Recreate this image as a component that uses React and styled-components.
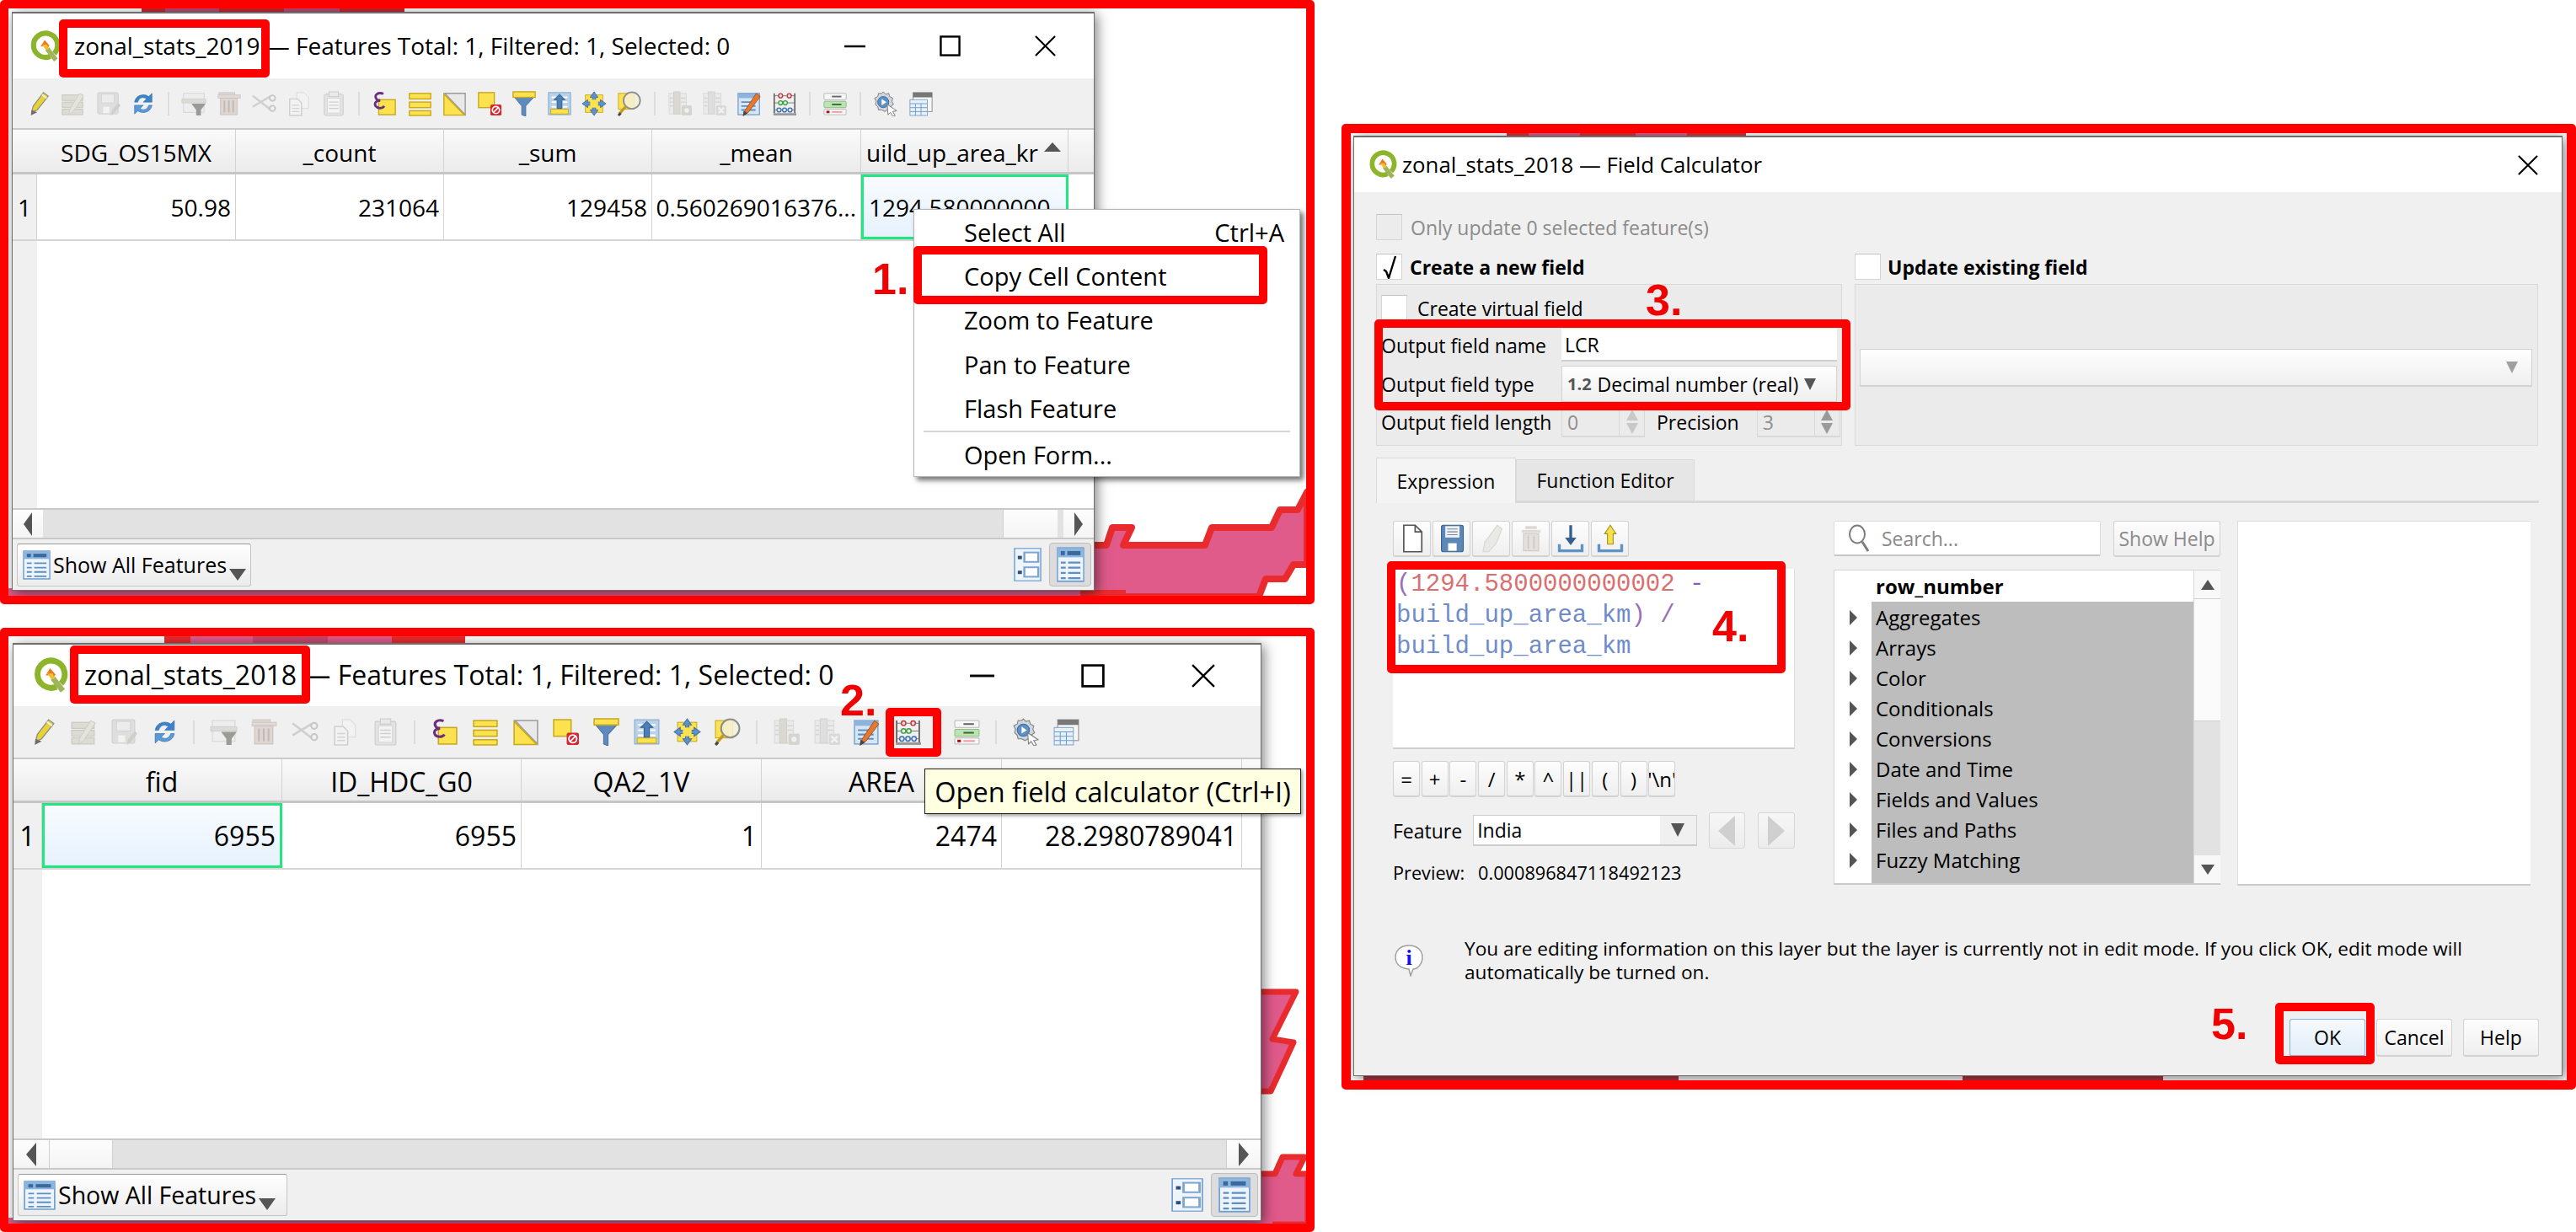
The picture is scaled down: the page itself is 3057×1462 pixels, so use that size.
import React from 'react';
import styled, { createGlobalStyle } from 'styled-components';

const UI = '"Open Sans","Liberation Sans",sans-serif';

const Global = createGlobalStyle`
  html, body { margin: 0; padding: 0; background: #fff; }
  body { font-family: ${UI}; color: #000; }
  * { box-sizing: border-box; }
`;

const Canvas = styled.div`
  position: relative;
  width: 3057px;
  height: 1462px;
  overflow: hidden;
  background: #fff;
`;
const Backdrop = styled.svg`
  position: absolute;
  left: 0;
  top: 0;
`;
const Win = styled.section`
  position: absolute;
  left: ${p => p.$x}px;
  top: ${p => p.$y}px;
  width: ${p => p.$w}px;
  height: ${p => p.$h}px;
  display: flex;
  flex-direction: column;
  background: #fff;
  border: 1px solid #6e6e6e;
  border-top-width: 2px;
  box-shadow: 3px 3px 14px rgba(0, 0, 0, 0.5);
`;
const TitleBar = styled.header`
  flex: none;
  height: ${p => p.$h}px;
  display: flex;
  align-items: center;
  padding-left: ${p => p.$pad}px;
  background: #fff;
  font-size: ${p => p.$fs}px;
  white-space: pre;
`;
const LogoSlot = styled.span`
  flex: none;
  display: flex;
  width: ${p => p.$w}px;
`;
const TitleText = styled.span`
  flex: 1;
  line-height: 1.2;
`;
const WinButton = styled.span`
  flex: none;
  width: ${p => p.$w}px;
  margin-right: ${p => p.$mr || 0}px;
  display: flex;
  justify-content: center;
  align-items: center;
`;
const Toolbar = styled.div`
  flex: none;
  height: ${p => p.$h}px;
  display: flex;
  align-items: center;
  padding-left: ${p => p.$pad}px;
  background: #f0f0f0;
  border-bottom: 2px solid #c9c9c9;
`;
const ToolBtn = styled.span`
  flex: none;
  width: ${p => p.$w}px;
  display: flex;
  justify-content: center;
`;
const ToolSep = styled.span`
  flex: none;
  width: ${p => p.$w}px;
  height: 28px;
  display: flex;
  justify-content: center;
  &::before { content: ''; width: 2px; background: #dcdcdc; }
`;
const TableArea = styled.div`
  flex: 1;
  min-height: 0;
  display: flex;
  flex-direction: column;
  font-size: ${p => p.$fs}px;
  background: linear-gradient(to right, #f0f0f0 ${p => p.$head}px, #fff ${p => p.$head}px);
`;
const HeaderRow = styled.div`
  flex: none;
  height: ${p => p.$h}px;
  display: flex;
  background: linear-gradient(#fafafa, #ebebeb);
  border-bottom: 3px solid #c6c6c6;
`;
const HeadCorner = styled.div`
  flex: none;
  width: ${p => p.$w}px;
`;
const HeadCell = styled.div`
  flex: none;
  width: ${p => p.$w}px;
  display: flex;
  align-items: center;
  justify-content: ${p => (p.$left ? 'flex-start' : 'center')};
  padding: 4px 0 0 ${p => (p.$left ? 6 : 0)}px;
  border-right: 1.5px solid #d2d2d2;
  overflow: hidden;
  white-space: nowrap;
  position: relative;
`;
const SortMark = styled.span`
  position: absolute;
  right: 8px;
  top: 15px;
  width: 0;
  height: 0;
  border-left: 10px solid transparent;
  border-right: 10px solid transparent;
  border-bottom: 11px solid #555;
`;
const DataRow = styled.div`
  flex: none;
  height: ${p => p.$h}px;
  display: flex;
  border-bottom: 2px solid #d5d5d5;
`;
const RowHead = styled.div`
  flex: none;
  width: ${p => p.$w}px;
  display: flex;
  align-items: center;
  justify-content: center;
  background: #f0f0f0;
  border-right: 1.5px solid #d2d2d2;
`;
const Cell = styled.div`
  flex: none;
  width: ${p => p.$w}px;
  display: flex;
  align-items: center;
  justify-content: ${p => (p.$start ? 'flex-start' : 'flex-end')};
  padding: 0 ${p => (p.$start ? 0 : 5)}px 0 ${p => (p.$start ? 6 : 0)}px;
  border-right: 1.5px solid #d2d2d2;
  overflow: hidden;
  white-space: nowrap;
  ${p => p.$sel && `
    border: 3px solid #22e67e;
    background: linear-gradient(#f8fbff, #e6f2fd);
  `}
`;
const ScrollBar = styled.div`
  flex: none;
  height: 37px;
  display: flex;
  background: #e2e2e2;
  border-top: 2px solid #c9c9c9;
  border-bottom: 2px solid #c9c9c9;
`;
const ScrollBtn = styled.div`
  flex: none;
  width: ${p => p.$w}px;
  margin-left: ${p => p.$ml || 0}px;
  display: flex;
  align-items: center;
  justify-content: center;
  background: linear-gradient(#fdfdfd, #f4f4f4);
  border-left: ${p => (p.$edge ? '1px solid #cfcfcf' : 'none')};
  border-right: ${p => (p.$edgeR ? '1px solid #cfcfcf' : 'none')};
`;
const ScrollTrack = styled.div`
  flex: 1;
`;
const Tri = styled.span`
  display: inline-block;
  flex: none;
  width: 0;
  height: 0;
  ${p => {
    const c = p.$c || '#555';
    const l = p.$l || 8;
    const b = p.$b || 14;
    if (p.$dir === 'left') return `border-top:${b / 2}px solid transparent;border-bottom:${b / 2}px solid transparent;border-right:${l}px solid ${c};`;
    if (p.$dir === 'right') return `border-top:${b / 2}px solid transparent;border-bottom:${b / 2}px solid transparent;border-left:${l}px solid ${c};`;
    if (p.$dir === 'up') return `border-left:${b / 2}px solid transparent;border-right:${b / 2}px solid transparent;border-bottom:${l}px solid ${c};`;
    return `border-left:${b / 2}px solid transparent;border-right:${b / 2}px solid transparent;border-top:${l}px solid ${c};`;
  }}
`;
const BottomBar = styled.div`
  flex: none;
  height: ${p => p.$h}px;
  display: flex;
  align-items: center;
  padding: 0 3px 0 5px;
  background: #f0f0f0;
  justify-content: space-between;
`;
const ShowButton = styled.div`
  width: ${p => p.$w}px;
  height: ${p => p.$h}px;
  display: flex;
  align-items: center;
  padding-left: 6px;
  gap: 3px;
  font-size: ${p => p.$fs}px;
  background: linear-gradient(#fefefe, #ececec);
  border: 1px solid #c4c4c4;
  border-top-color: #9a9a9a;
  border-radius: 3px;
  white-space: nowrap;
`;
const ShowArrow = styled.span`
  align-self: flex-end;
  margin-bottom: 6px;
  display: flex;
`;
const ViewToggle = styled.div`
  display: flex;
  align-items: center;
  gap: ${p => p.$gap}px;
`;
const ViewBtn = styled.span`
  width: ${p => p.$w}px;
  height: 52px;
  display: flex;
  align-items: center;
  justify-content: center;
  border-radius: 4px;
  ${p => p.$on && 'background:#dcdcdc;border:1px solid #bdbdbd;'}
`;
const Menu = styled.div`
  position: absolute;
  left: 1084px;
  top: 248px;
  width: 459px;
  height: 318px;
  background: #fff;
  border: 1px solid #b5b5b5;
  box-shadow: 4px 4px 6px rgba(0, 0, 0, 0.55);
  font-size: 29px;
  white-space: nowrap;
`;
const MenuItem = styled.div`
  height: 52.4px;
  display: flex;
  justify-content: space-between;
  align-items: center;
  padding: 0 18px 0 59px;
`;
const MenuSep = styled.div`
  height: 2px;
  margin: 0 11px 0 11px;
  background: #d6d6d6;
`;
const Tooltip = styled.div`
  position: absolute;
  left: 1097px;
  top: 912px;
  width: 447px;
  height: 54px;
  display: flex;
  align-items: center;
  justify-content: center;
  background: #ffffe1;
  border: 1.5px solid #222;
  box-shadow: 2px 2px 4px rgba(0, 0, 0, 0.4);
  font-size: 32.5px;
  white-space: nowrap;
`;
const RedFrame = styled.div`
  position: absolute;
  left: ${p => p.$x}px;
  top: ${p => p.$y}px;
  width: ${p => p.$w}px;
  height: ${p => p.$h}px;
  border: ${p => p.$t || 10}px solid #ff0000;
  border-radius: 5px;
`;
const Step = styled.div`
  position: absolute;
  left: ${p => p.$x}px;
  top: ${p => p.$y}px;
  font-family: "Liberation Sans", Arial, sans-serif;
  font-weight: 700;
  font-size: 52px;
  line-height: 1;
  color: #f00000;
`;
const DialogBody = styled.div`
  flex: 1;
  display: flex;
  flex-direction: column;
  padding: 26px 27px 0 26px;
  background: #f0f0f0;
  font-size: 23px;
`;
const CheckRow = styled.div`
  display: flex;
  align-items: center;
  height: 31px;
  gap: ${p => p.$gap || 10}px;
  font-weight: ${p => (p.$bold ? 700 : 400)};
  color: ${p => (p.$off ? '#8b8b8b' : '#000')};
  white-space: nowrap;
  font-size: 23px;
`;
const CheckBox = styled.span`
  flex: none;
  width: 31px;
  height: 31px;
  display: flex;
  align-items: center;
  justify-content: center;
  background: ${p => (p.$off ? '#ececec' : '#fff')};
  border: 1px solid #d4d4d4;
  border-top-color: #c4c4c4;
`;
const FieldColumns = styled.div`
  margin-top: 16px;
  display: grid;
  grid-template-columns: 553px 811px;
  column-gap: 15px;
`;
const GroupBox = styled.div`
  margin-top: 5px;
  height: 192px;
  background: #ebebeb;
  border: 1px solid #d9d9d9;
  padding: ${p => p.$pt}px 6px 0 5px;
`;
const FormGrid = styled.div`
  margin-top: 9px;
  display: grid;
  grid-template-columns: 214px 327px;
  grid-template-rows: 39px 44px 36px;
  row-gap: 5px;
  align-items: center;
`;
const FormLabel = styled.div`
  white-space: nowrap;
`;
const LineInput = styled.div`
  height: 39px;
  display: flex;
  align-items: center;
  padding-left: 4px;
  background: #fff;
  border-bottom: 2px solid #cfcfcf;
`;
const Combo = styled.div`
  height: ${p => p.$h || 44}px;
  display: flex;
  align-items: center;
  padding: 0 ${p => p.$pr || 16}px 0 6px;
  gap: 7px;
  background: linear-gradient(#fefefe, #efefef);
  border: 1px solid #d2d2d2;
  border-bottom-width: 2px;
  white-space: nowrap;
  justify-content: ${p => (p.$end ? 'flex-end' : 'flex-start')};
`;
const TypeBadge = styled.span`
  font-weight: 700;
  font-size: 20px;
  color: #555;
`;
const SpinRow = styled.div`
  display: flex;
  align-items: center;
`;
const Spin = styled.div`
  flex: none;
  width: 99px;
  height: 36px;
  display: flex;
  align-items: center;
  justify-content: space-between;
  padding-left: 6px;
  color: #8f8f8f;
  background: #ebebeb;
  border: 1px solid #d8d8d8;
  border-bottom-width: 2px;
`;
const SpinArrows = styled.span`
  width: 30px;
  height: 100%;
  display: flex;
  flex-direction: column;
  align-items: center;
  justify-content: space-around;
  border-left: 1px solid #d8d8d8;
`;
const PrecisionLabel = styled.span`
  margin: 0 21px 0 14px;
  white-space: nowrap;
`;
const TabBar = styled.div`
  margin-top: 14px;
  height: 54px;
  display: flex;
  align-items: flex-end;
  border-bottom: 3px solid #d8d8d8;
  font-size: 23px;
`;
const Tab = styled.div`
  width: ${p => p.$w}px;
  height: ${p => (p.$on ? 54 : 49)}px;
  margin-bottom: ${p => (p.$on ? -3 : 0)}px;
  display: flex;
  align-items: center;
  justify-content: center;
  background: ${p => (p.$on ? '#f4f4f4' : '#e6e6e6')};
  border: 1px solid #dadada;
  border-bottom: none;
  white-space: nowrap;
`;
const ExprGrid = styled.div`
  margin: 21px 0 0 20px;
  height: 431px;
  display: grid;
  grid-template-columns: 477px 459px 348px;
  column-gap: 46px;
  & > :nth-child(3) { margin-left: -26px; width: 348px; }
`;
const Col = styled.div`
  display: flex;
  flex-direction: column;
  min-width: 0;
`;
const IconRow = styled.div`
  height: 43px;
  display: flex;
  gap: 2px;
`;
const IconBtn = styled.span`
  width: 45px;
  height: 43px;
  display: flex;
  align-items: center;
  justify-content: center;
  background: linear-gradient(#fdfdfd, #efefef);
  border: 1px solid #d2d2d2;
  border-bottom-width: 2px;
  border-radius: 3px;
`;
const Editor = styled.div`
  margin-top: 14px;
  height: 214px;
  padding-left: 4px;
  background: #fff;
  border-bottom: 2px solid #cfcfcf;
  border-right: 1px solid #dcdcdc;
  font-family: "Liberation Mono", monospace;
  font-size: 29px;
  line-height: 37px;
  white-space: pre;
`;
const Tok = styled.span`
  color: ${p => p.$c};
`;
const OpRow = styled.div`
  margin-top: 14px;
  display: flex;
  gap: 1.7px;
`;
const OpBtn = styled.span`
  width: 32px;
  height: 43px;
  display: flex;
  align-items: center;
  justify-content: center;
  font-size: 24px;
  background: linear-gradient(#fdfdfd, #efefef);
  border: 1px solid #d2d2d2;
  border-bottom-width: 2px;
  border-radius: 3px;
  white-space: nowrap;
  overflow: hidden;
`;
const FeatureRow = styled.div`
  margin-top: 18px;
  height: 43px;
  display: flex;
  align-items: center;
  font-size: 23px;
`;
const FeatureCombo = styled.div`
  margin-left: 13px;
  width: 267px;
  height: 37px;
  display: flex;
  align-items: center;
  justify-content: space-between;
  padding-left: 4px;
  background: #fff;
  border: 1px solid #cdcdcd;
  border-bottom-width: 2px;
`;
const ComboArrowBox = styled.span`
  width: 43px;
  height: 100%;
  display: flex;
  align-items: center;
  justify-content: center;
  background: #f0f0f0;
`;
const NavBtn = styled.span`
  width: 44px;
  height: 43px;
  margin-left: ${p => p.$ml}px;
  display: flex;
  align-items: center;
  justify-content: center;
  background: linear-gradient(#f6f6f6, #ececec);
  border: 1px solid #d6d6d6;
  border-radius: 3px;
`;
const PreviewRow = styled.div`
  margin-top: 12px;
  height: 32px;
  display: flex;
  gap: 16px;
  align-items: center;
  font-size: 21.7px;
  white-space: nowrap;
`;
const SearchLine = styled.div`
  display: flex;
  gap: 15px;
`;
const SearchBox = styled.div`
  width: 317px;
  height: 42px;
  display: flex;
  align-items: center;
  gap: 14px;
  padding-left: 16px;
  color: #8a8a8a;
  background: #fff;
  border: 1px solid #dcdcdc;
  border-bottom: 2px solid #c6c6c6;
  border-radius: 2px;
  font-size: 23px;
`;
const PlainBtn = styled.span`
  width: ${p => p.$w}px;
  height: ${p => p.$h}px;
  display: flex;
  align-items: center;
  justify-content: center;
  color: ${p => (p.$off ? '#8a8a8a' : '#000')};
  background: ${p => (p.$hot ? 'linear-gradient(#f5fafe,#e1edf9)' : 'linear-gradient(#fdfdfd,#efefef)')};
  border: 1px solid ${p => (p.$hot ? '#7db5ea' : '#d2d2d2')};
  border-bottom-width: 2px;
  border-radius: 3px;
  font-size: 23px;
`;
const FuncList = styled.div`
  margin-top: 15px;
  height: 374px;
  display: flex;
  background: #fff;
  border-top: 1px solid #d4d4d4;
  border-left: 1px solid #d4d4d4;
  border-bottom: 2px solid #cacaca;
  overflow: hidden;
`;
const FuncItems = styled.div`
  flex: 1;
  min-width: 0;
  overflow: hidden;
  font-size: 24px;
`;
const FuncHead = styled.div`
  height: 37px;
  padding-left: 49px;
  display: flex;
  align-items: center;
  font-weight: 700;
`;
const FuncRow = styled.div`
  height: 36px;
  display: flex;
  white-space: nowrap;
`;
const FuncArrow = styled.span`
  flex: none;
  width: 44px;
  display: flex;
  align-items: center;
  padding: 1px 0 0 18px;
`;
const FuncLabel = styled.span`
  flex: 1;
  display: flex;
  align-items: center;
  padding: 1px 0 0 5px;
  background: #bdbdbd;
`;
const VScroll = styled.div`
  flex: none;
  width: 32px;
  display: flex;
  flex-direction: column;
  background: #e2e2e2;
  border-left: 1px solid #d8d8d8;
`;
const VBtn = styled.span`
  height: 33px;
  display: flex;
  align-items: center;
  justify-content: center;
  background: #f8f8f8;
`;
const VHandle = styled.span`
  height: 146px;
  background: #fbfbfb;
  border-bottom: 1px solid #d0d0d0;
  border-top: 1px solid #d0d0d0;
`;
const VTrack = styled.span`
  flex: 1;
`;
const HelpPane = styled.div`
  background: #fff;
  border-top: 1px solid #dcdcdc;
  border-bottom: 2px solid #cacaca;
  border-left: 1px solid #dcdcdc;
`;
const InfoRow = styled.div`
  margin: 63px 0 0 21px;
  display: flex;
  align-items: flex-start;
  font-size: 22.6px;
  line-height: 28px;
`;
const InfoIcon = styled.span`
  flex: none;
  width: 84px;
  padding-top: 9px;
  display: flex;
`;
const InfoText = styled.div`
  width: 1260px;
  white-space: pre-line;
`;
const ButtonRow = styled.div`
  margin-top: 41px;
  display: flex;
  justify-content: flex-end;
  gap: 13px;
`;

/* ---------- drawings ---------- */
const Logo = ({ s }) => (
  <svg width={s} height={s} viewBox="0 0 40 40">
    <path d="M27 32.5A15 15 0 1 1 32 29" fill="none" stroke="#8db52c" strokeWidth="6.5" />
    <path d="M23 23L34 37" stroke="#a0b45a" strokeWidth="6" />
    <path d="M20 12l6 7-3 4-3-3-5 0z" fill="#ee7a1f" />
    <path d="M17 18l6 0 2 6-4 0z" fill="#f3c02f" />
  </svg>
);
const Ic = ({ s, children }) => (
  <svg width={s} height={s} viewBox="0 0 32 32">{children}</svg>
);
const D = { f: '#dcdcd4', s: '#c6c6be' };
const Y = { f: '#fde24f', s: '#c8a81c' };

const ICONS = {
  pencil: (
    <>
      <path d="M7 27L9 19 22 2l6 4.5L14 24z" fill="#e6d437" stroke="#8f8f80" strokeWidth="1.3" />
      <path d="M20 4.5l6 4.5" stroke="#eee" strokeWidth="2" />
      <path d="M6 31l1-7 7 3z" fill="#6f6f6f" />
    </>
  ),
  editList: (
    <>
      <rect x="2" y="5" width="26" height="7" fill={D.f} stroke={D.s} />
      <rect x="2" y="14" width="26" height="7" fill={D.f} stroke={D.s} />
      <rect x="2" y="23" width="26" height="7" fill={D.f} stroke={D.s} />
      <path d="M10 30l2-8L24 3l5 3-13 20z" fill="#e4e4de" stroke="#cfcfc8" />
    </>
  ),
  saveOff: (
    <>
      <rect x="2" y="2" width="26" height="27" rx="2" fill="#dedede" stroke="#cfcfcf" />
      <rect x="7" y="4" width="16" height="11" fill="#ececec" stroke="#d4d4d4" />
      <rect x="9" y="20" width="8" height="8" fill="#f2f2f2" />
      <path d="M19 31l1-6 8-10 3 3-8 10z" fill="#cfcfc8" />
    </>
  ),
  reload: (
    <>
      <path d="M5 14C6 6 16 2 23 7l4-4v11H16l4-4c-4-3-9-2-11 4z" fill="#3d83c9" stroke="#2a69a8" strokeWidth=".6" />
      <path d="M27 18C26 26 16 30 9 25l-4 4V18h11l-4 4c4 3 9 2 11-4z" fill="#5a9ad8" stroke="#2a69a8" strokeWidth=".6" />
    </>
  ),
  delSel: (
    <>
      <rect x="3" y="3" width="26" height="24" fill="#eeeeee" stroke="#d4d4d4" />
      <rect x="1" y="10" width="30" height="5" fill="#dcdcd6" stroke="#cfcfcf" />
      <path d="M13 16h18l-6 8v7h-6v-7z" fill="#9a9a96" />
    </>
  ),
  trash: (
    <>
      <rect x="3" y="2" width="20" height="4" fill="#ddd6d2" stroke="#cec6c2" />
      <rect x="2" y="5" width="28" height="4" fill="#e1dbd8" stroke="#cfc8c5" />
      <rect x="5" y="9" width="21" height="21" fill="#ddd6d2" stroke="#c9c1bd" />
      <path d="M10 12v15M15.500 12v15M21 12v15" stroke="#c2b9b5" strokeWidth="2" />
    </>
  ),
  cut: (
    <>
      <path d="M2 6l22 17M2 20L24 7" stroke="#cfcfcf" strokeWidth="2.600" />
      <circle cx="27" cy="9" r="3.500" fill="none" stroke="#c6c6c6" strokeWidth="2" />
      <circle cx="27" cy="22" r="3.500" fill="none" stroke="#c6c6c6" strokeWidth="2" />
    </>
  ),
  copy: (
    <>
      <path d="M13 2h9l6 6v14H13z" fill="#f2f2f2" stroke="#dadada" />
      <path d="M4 10h10l5 5v16H4z" fill="#f2f2f2" stroke="#cfcfcf" strokeWidth="1.500" />
      <path d="M7 18h9M7 22h9M7 26h9" stroke="#d4d4d4" strokeWidth="1.500" />
    </>
  ),
  paste: (
    <>
      <rect x="4" y="4" width="24" height="27" rx="2" fill="#e3e3e3" stroke="#cbcbcb" />
      <rect x="10" y="1" width="12" height="6" fill="#e9e9e9" stroke="#cbcbcb" />
      <rect x="8" y="9" width="16" height="19" fill="#f4f4f4" stroke="#d6d6d6" />
      <path d="M10 14h12M10 18h12M10 22h12" stroke="#cfcfcf" strokeWidth="1.500" />
    </>
  ),
  epsilon: (
    <>
      <rect x="9" y="11" width="21" height="19" fill={Y.f} stroke={Y.s} strokeWidth="1.500" />
      <path d="M15 3.500C8 1 3 5 6 10c1 2 4 2 5 2-5 0-8 3-6 7 2 3 8 4 11 0" fill="none" stroke="#6b2f7e" strokeWidth="3" />
    </>
  ),
  selAll: (
    <>
      <rect x="3" y="3" width="27" height="7" fill={Y.f} stroke={Y.s} strokeWidth="1.500" />
      <rect x="3" y="14" width="27" height="7" fill={Y.f} stroke={Y.s} strokeWidth="1.500" />
      <rect x="3" y="25" width="27" height="6" fill={Y.f} stroke={Y.s} strokeWidth="1.500" />
    </>
  ),
  invert: (
    <>
      <path d="M4 3h26v27z" fill="#e9e9e9" stroke="#9a9a9a" strokeWidth="1.500" />
      <path d="M3 4l26 26.500H3z" fill={Y.f} stroke={Y.s} strokeWidth="1.500" />
    </>
  ),
  deselect: (
    <>
      <rect x="2" y="2" width="20" height="19" fill={Y.f} stroke={Y.s} strokeWidth="1.500" />
      <rect x="17" y="17" width="14" height="14" rx="2" fill="#d8242c" />
      <circle cx="24" cy="24" r="4.500" fill="none" stroke="#fff" strokeWidth="1.800" />
      <path d="M21 27l6-6" stroke="#fff" strokeWidth="1.800" />
    </>
  ),
  funnel: (
    <>
      <path d="M3 7L13 19v11l5 2V19L29 7z" fill="#5d8bc0" stroke="#4a6f9c" />
      <rect x="2" y="1" width="28" height="7" fill={Y.f} stroke={Y.s} strokeWidth="1.500" />
    </>
  ),
  moveTop: (
    <>
      <rect x="2" y="2" width="28" height="28" fill="#b9d2ea" stroke="#7ea5cd" />
      <path d="M6 8h6M6 14h6M6 20h6M20 8h6M20 14h6M20 20h6" stroke="#fff" strokeWidth="2" />
      <rect x="5" y="23" width="22" height="6" fill={Y.f} stroke={Y.s} />
      <path d="M16 4l7 7h-4v11h-6V11H9z" fill="#4d7fb5" stroke="#2f5f92" />
    </>
  ),
  panSel: (
    <>
      <rect x="5" y="5" width="22" height="22" fill={Y.f} stroke={Y.s} />
      <path d="M16 1l5 7h-3v6h6v-3l7 5-7 5v-3h-6v6h3l-5 7-5-7h3v-6H8v3l-7-5 7-5v3h6V8h-3z" fill="#5f90c6" stroke="#4572a6" />
      <rect x="11" y="11" width="10" height="10" fill={Y.f} />
    </>
  ),
  zoomSel: (
    <>
      <rect x="2" y="3" width="20" height="20" fill={Y.f} stroke={Y.s} />
      <circle cx="19" cy="12" r="10.500" fill="#f3f0da" fillOpacity=".85" stroke="#8d8d8d" strokeWidth="2" />
      <path d="M11 20L3 29" stroke="#c59a22" strokeWidth="3.500" />
      <path d="M2 31l3-3" stroke="#444" strokeWidth="3" />
    </>
  ),
  newField: (
    <>
      <rect x="2" y="3" width="22" height="26" fill="#eaeaea" stroke="#d8d8d8" />
      <rect x="8" y="1" width="8" height="28" fill="#d9d9d2" stroke="#cfcfc8" />
      <path d="M17 9h6M17 14h6M3 9h4M3 14h4M3 19h4" stroke="#d4d4d4" strokeWidth="1.500" />
      <rect x="18" y="18" width="13" height="13" rx="2" fill="#d5d5cf" />
      <circle cx="24.500" cy="24.500" r="3" fill="#f0f0f0" />
    </>
  ),
  delField: (
    <>
      <rect x="2" y="3" width="22" height="26" fill="#eaeaea" stroke="#d8d8d8" />
      <rect x="8" y="1" width="8" height="28" fill="#dedede" stroke="#d2d2d2" />
      <path d="M17 9h6M17 14h6M3 9h4M3 14h4M3 19h4" stroke="#d4d4d4" strokeWidth="1.500" />
      <rect x="18" y="18" width="13" height="13" rx="2" fill="#d9d9d9" />
      <path d="M21 21l7 7M28 21l-7 7" stroke="#f2f2f2" strokeWidth="2.500" />
    </>
  ),
  organize: (
    <>
      <rect x="1" y="3" width="27" height="27" fill="#d6e6f5" stroke="#6f9bc9" strokeWidth="1.300" />
      <rect x="1" y="3" width="27" height="6" fill="#8db4dc" />
      <path d="M5 14h18M5 19h18M5 24h18" stroke="#5f8fc2" strokeWidth="2" />
      <path d="M8 31l2-7L24 3l5 4-15 20z" fill="#e8762c" stroke="#8f4a1c" strokeWidth=".8" />
      <path d="M7 32l1-7 5 3z" fill="#444" />
    </>
  ),
  abacus: (
    <>
      <rect x="2" y="28" width="29" height="3" fill="#9a9a9a" />
      <path d="M3 3v25M29 3v25" stroke="#555" strokeWidth="1.600" />
      <path d="M3 6h26M3 15h26M3 24h26" stroke="#777" />
      <g fill="#f6dede" stroke="#c0363a" strokeWidth="1.400"><circle cx="11" cy="6" r="2.600" /><circle cx="22" cy="6" r="2.600" /></g>
      <g fill="#e2f3df" stroke="#3f9c46" strokeWidth="1.400"><circle cx="11" cy="15" r="2.600" /><circle cx="17" cy="15" r="2.600" /></g>
      <g fill="#dfe9f6" stroke="#3d6fb0" strokeWidth="1.400"><circle cx="9" cy="24" r="2.600" /><circle cx="16" cy="24" r="2.600" /><circle cx="23" cy="24" r="2.600" /></g>
    </>
  ),
  condFormat: (
    <>
      <rect x="2" y="3" width="28" height="8" rx="1" fill="#f7f7f7" stroke="#b8b8b8" />
      <path d="M12 7h12" stroke="#666" strokeWidth="2" />
      <rect x="2" y="13" width="28" height="8" rx="1" fill="#bde3b4" stroke="#8bbf80" />
      <path d="M12 17h12" stroke="#3a6a36" strokeWidth="2" />
      <rect x="2" y="23" width="28" height="7" rx="1" fill="#f7f7f7" stroke="#b8b8b8" />
      <rect x="5" y="25" width="4" height="3" fill="#a11" />
      <path d="M12 26.500h13" stroke="#f09aa0" strokeWidth="2" />
    </>
  ),
  actions: (
    <>
      <path d="M13 1l3 3 4-1 1 4 4 2-1 4 2 4-3 2 0 4-5 1-3 2-4-2-4 0-1-4-3-3 1-4-2-4 4-2 1-4 4 0z" fill="#cfd6de" stroke="#7d7d7d" />
      <circle cx="13" cy="14" r="7" fill="#5f90c6" stroke="#3f6a9c" />
      <path d="M11 10l6 4-6 4z" fill="#fff" />
      <path d="M18 17l12 8-5 1 3 5-3 1-3-5-3 3z" fill="#fff" stroke="#777" />
    </>
  ),
  dock: (
    <>
      <rect x="6" y="2" width="24" height="24" fill="#f6f6f6" stroke="#8c8c8c" />
      <rect x="6" y="2" width="24" height="6" fill="#777" />
      <rect x="2" y="11" width="22" height="20" fill="#e8f0f8" stroke="#7ea5cd" />
      <path d="M2 16h22M2 21h22M2 26h22M9 16v15M16 16v15" stroke="#6f9bc9" />
    </>
  ),
  docNew: (
    <path d="M7 2h12l7 7v21H7z M19 2v7h7" fill="#fff" stroke="#555" strokeWidth="1.500" />
  ),
  floppy: (
    <>
      <rect x="5" y="2" width="23" height="28" rx="2" fill="#5c88b8" stroke="#3a5f88" />
      <rect x="9" y="3" width="15" height="12" fill="#eef2f6" />
      <path d="M11 6h11M11 9h11M11 12h11" stroke="#7a8a9a" />
      <rect x="12" y="21" width="9" height="8" fill="#fff" />
    </>
  ),
  pencilOff: (
    <path d="M7 30l2-10L22 2l5 4-6 15L13 30z" fill="#e9e9e6" stroke="#d6d6d2" />
  ),
  trashOff: (
    <>
      <rect x="10" y="3" width="12" height="3" fill="#ddd6d2" />
      <rect x="6" y="7" width="20" height="3" fill="#e0dad7" />
      <rect x="8" y="11" width="16" height="18" fill="#e5e0dd" stroke="#cfc8c5" />
      <path d="M13 13v14M19 13v14" stroke="#cfc8c5" strokeWidth="1.500" />
    </>
  ),
  download: (
    <>
      <path d="M16 2v18" stroke="#35608f" strokeWidth="3" />
      <path d="M10 15l6 8 6-8z" fill="#35608f" />
      <path d="M4 22v7h24v-7" fill="none" stroke="#5e93c8" strokeWidth="3" />
    </>
  ),
  upload: (
    <>
      <path d="M10 11l6-9 6 9h-3v11h-6V11z" fill="#f6e04c" stroke="#a49322" />
      <path d="M4 22v7h24v-7" fill="none" stroke="#5e93c8" strokeWidth="3" />
    </>
  ),
};

const Icon = ({ n, s }) => <Ic s={s}>{ICONS[n]}</Ic>;

const TableIcon = ({ w, h }) => (
  <svg width={w} height={h} viewBox="0 0 34 34" preserveAspectRatio="none">
    <rect x="1" y="1" width="32" height="32" fill="#eef4fb" stroke="#6e9fd0" strokeWidth="1.500" />
    <rect x="1" y="1" width="32" height="9" fill="#8eb5de" />
    <rect x="5" y="4" width="5" height="4" fill="#39699e" />
    <rect x="13" y="4" width="16" height="4" fill="#39699e" />
    <path d="M5 15h6M14 15h15M5 20h6M14 20h15M5 25h6M14 25h15M5 30h6M14 30h15" stroke="#5f8fc2" strokeWidth="1.800" />
  </svg>
);
const FormIcon = ({ w, h }) => (
  <svg width={w} height={h} viewBox="0 0 34 50" preserveAspectRatio="none">
    <rect x="1" y="1" width="32" height="48" fill="#eef4fb" stroke="#6e9fd0" strokeWidth="1.500" />
    <rect x="13" y="7" width="17" height="14" fill="#fff" stroke="#7ea5cd" strokeWidth="2.500" />
    <rect x="13" y="29" width="17" height="14" fill="#fff" stroke="#7ea5cd" strokeWidth="2.500" />
    <rect x="5" y="12" width="5" height="5" fill="#2f4f78" />
    <rect x="5" y="34" width="5" height="5" fill="#2f4f78" />
  </svg>
);
const MinGlyph = ({ w }) => (
  <svg width={w} height="4" viewBox="0 0 30 4"><path d="M0 2h30" stroke="#000" strokeWidth="3" /></svg>
);
const MaxGlyph = ({ s }) => (
  <svg width={s} height={s} viewBox="0 0 26 26"><rect x="1.500" y="1.500" width="23" height="23" fill="none" stroke="#000" strokeWidth="2.500" /></svg>
);
const CloseGlyph = ({ s }) => (
  <svg width={s} height={s} viewBox="0 0 26 26"><path d="M1 1l24 24M25 1L1 25" stroke="#000" strokeWidth="2.200" fill="none" /></svg>
);
const CheckGlyph = () => (
  <svg width="26" height="28" viewBox="0 0 26 28"><path d="M6 17l3 2 3 8L20 1" fill="none" stroke="#000" strokeWidth="2.400" /></svg>
);
const SearchGlyph = () => (
  <svg width="26" height="34" viewBox="0 0 26 34">
    <ellipse cx="11" cy="12" rx="9" ry="10.500" fill="none" stroke="#7d7d7d" strokeWidth="2" />
    <path d="M17 21l7 11" stroke="#7d7d7d" strokeWidth="3" />
  </svg>
);
const InfoBubble = () => (
  <svg width="36" height="38" viewBox="0 0 36 38">
    <path d="M18 1c10 0 16 6 16 14s-6 14-11 14l-3 8-2-8C8 28 2 23 2 15S8 1 18 1z" fill="#fff" stroke="#a0a0a0" strokeWidth="1.500" />
    <text x="18" y="24" textAnchor="middle" fontFamily="Liberation Serif, serif" fontWeight="700" fontSize="26" fill="#1212ee">i</text>
  </svg>
);

/* ---------- table window ---------- */
const GROUPS = [
  ['pencil', 'editList', 'saveOff', 'reload'],
  ['delSel', 'trash', 'cut', 'copy', 'paste'],
  ['epsilon', 'selAll', 'invert', 'deselect', 'funnel', 'moveTop', 'panSel', 'zoomSel'],
  ['newField', 'delField', 'organize', 'abacus'],
  ['condFormat'],
  ['actions', 'dock'],
];

function TableWindow({ t }) {
  return (
    <Win $x={t.x} $y={t.y} $w={t.w} $h={t.h}>
      <TitleBar $h={t.titleH} $pad={t.titlePad} $fs={t.fs}>
        <LogoSlot $w={t.logoW}><Logo s={t.logoS} /></LogoSlot>
        <TitleText>{t.title}</TitleText>
        <WinButton $w={t.btnW}><MinGlyph w={t.minW} /></WinButton>
        <WinButton $w={t.btnW}><MaxGlyph s={t.glyph} /></WinButton>
        <WinButton $w={t.btnW} $mr={t.btnEnd}><CloseGlyph s={t.glyph} /></WinButton>
      </TitleBar>
      <Toolbar $h={t.toolH} $pad={t.toolPad}>
        {GROUPS.map((g, i) => (
          <React.Fragment key={i}>
            {i > 0 && <ToolSep $w={t.sepW} />}
            {g.map(n => (
              <ToolBtn key={n} $w={t.pitch}><Icon n={n} s={t.iconS} /></ToolBtn>
            ))}
          </React.Fragment>
        ))}
      </Toolbar>
      <TableArea $fs={t.cellFs} $head={t.head}>
        <HeaderRow $h={t.headH}>
          <HeadCorner $w={t.head} />
          {t.cols.map(c => (
            <HeadCell key={c.h} $w={c.w} $left={c.left}>
              {c.h}
              {c.sort && <SortMark />}
            </HeadCell>
          ))}
        </HeaderRow>
        <DataRow $h={t.rowH}>
          <RowHead $w={t.head}>1</RowHead>
          {t.cols.map(c => (
            <Cell key={c.h} $w={c.w} $sel={c.sel} $start={c.left}>{c.v}</Cell>
          ))}
        </DataRow>
      </TableArea>
      <ScrollBar>
        {t.scrollEnd ? (
          <>
            <ScrollBtn $w={36}><Tri $dir="left" $l={10} $b={28} /></ScrollBtn>
            <ScrollTrack />
            <ScrollBtn $w={65} $edge />
            <ScrollBtn $w={36} $ml={7}><Tri $dir="right" $l={10} $b={28} /></ScrollBtn>
          </>
        ) : (
          <>
            <ScrollBtn $w={43} $edgeR><Tri $dir="left" $l={12} $b={28} /></ScrollBtn>
            <ScrollBtn $w={75} $edgeR />
            <ScrollTrack />
            <ScrollBtn $w={41} $edge><Tri $dir="right" $l={12} $b={28} /></ScrollBtn>
          </>
        )}
      </ScrollBar>
      <BottomBar $h={t.barH}>
        <ShowButton $w={t.showW} $h={t.showH} $fs={t.showFs}>
          <TableIcon w={t.showIcon} h={35} />
          Show All Features
          <ShowArrow><Tri $dir="down" $l={14} $b={20} $c="#555" /></ShowArrow>
        </ShowButton>
        <ViewToggle $gap={t.viewGap}>
          <FormIcon w={t.showIcon} h={40} />
          <ViewBtn $w={t.viewW} $on><TableIcon w={t.showIcon} h={42} /></ViewBtn>
        </ViewToggle>
      </BottomBar>
    </Win>
  );
}

const WIN1 = {
  x: 14, y: 14, w: 1285, h: 687,
  title: 'zonal_stats_2019 — Features Total: 1, Filtered: 1, Selected: 0',
  titleH: 77, titlePad: 19, fs: 28, logoW: 54, logoS: 38,
  btnW: 113, btnEnd: 1, minW: 25, glyph: 25,
  toolH: 61, toolPad: 10, pitch: 41.5, sepW: 18.5, iconS: 30,
  cellFs: 28, head: 29, headH: 53, rowH: 79, barH: 60,
  scrollEnd: true, showW: 278, showH: 51, showFs: 25, showIcon: 33,
  viewGap: 9, viewW: 50,
  cols: [
    { h: 'SDG_OS15MX', v: '50.98', w: 236 },
    { h: '_count', v: '231064', w: 247 },
    { h: '_sum', v: '129458', w: 247 },
    { h: '_mean', v: '0.560269016376...', w: 248 },
    { h: 'uild_up_area_kr', v: '1294.580000000', w: 246, left: true, sel: true, sort: true },
  ],
};
const WIN2 = {
  x: 15, y: 763, w: 1482, h: 686,
  title: 'zonal_stats_2018 — Features Total: 1, Filtered: 1, Selected: 0',
  titleH: 73, titlePad: 22, fs: 32, logoW: 62, logoS: 43,
  btnW: 131, btnEnd: 3, minW: 29, glyph: 28,
  toolH: 63, toolPad: 11, pitch: 48, sepW: 22, iconS: 33,
  cellFs: 32, head: 34, headH: 52, rowH: 79, barH: 60,
  scrollEnd: false, showW: 320, showH: 50, showFs: 28.5, showIcon: 38,
  viewGap: 9, viewW: 56,
  cols: [
    { h: 'fid', v: '6955', w: 285, sel: true },
    { h: 'ID_HDC_G0', v: '6955', w: 284 },
    { h: 'QA2_1V', v: '1', w: 285 },
    { h: 'AREA', v: '2474', w: 285 },
    { h: '', v: '28.2980789041', w: 285 },
  ],
};

const FUNCS = ['Aggregates', 'Arrays', 'Color', 'Conditionals', 'Conversions', 'Date and Time', 'Fields and Values', 'Files and Paths', 'Fuzzy Matching', 'General'];
const OPS = ['=', '+', '-', '/', '*', '^', '||', '(', ')', "'\\n'"];

function CalcWindow() {
  return (
    <Win $x={1606} $y={161} $w={1435} $h={1116}>
      <TitleBar $h={65} $pad={16} $fs={25.8}>
        <LogoSlot $w={41}><Logo s={35} /></LogoSlot>
        <TitleText>zonal_stats_2018 — Field Calculator</TitleText>
        <WinButton $w={24} $mr={28}><CloseGlyph s={24} /></WinButton>
      </TitleBar>
      <DialogBody>
        <CheckRow $off>
          <CheckBox $off />
          Only update 0 selected feature(s)
        </CheckRow>
        <FieldColumns>
          <div>
            <CheckRow $bold $gap={9}><CheckBox><CheckGlyph /></CheckBox>Create a new field</CheckRow>
            <GroupBox $pt={12}>
              <CheckRow $gap={12}><CheckBox />Create virtual field</CheckRow>
              <FormGrid>
                <FormLabel>Output field name</FormLabel>
                <LineInput>LCR</LineInput>
                <FormLabel>Output field type</FormLabel>
                <Combo>
                  <TypeBadge>1.2</TypeBadge>
                  Decimal number (real)
                  <Tri $dir="down" $l={14} $b={14} />
                </Combo>
                <FormLabel>Output field length</FormLabel>
                <SpinRow>
                  <Spin>0<SpinArrows><Tri $dir="up" $l={13} $b={14} $c="#c8c8c8" /><Tri $dir="down" $l={13} $b={14} $c="#c8c8c8" /></SpinArrows></Spin>
                  <PrecisionLabel>Precision</PrecisionLabel>
                  <Spin>3<SpinArrows><Tri $dir="up" $l={13} $b={14} $c="#9a9a9a" /><Tri $dir="down" $l={13} $b={14} $c="#9a9a9a" /></SpinArrows></Spin>
                </SpinRow>
              </FormGrid>
            </GroupBox>
          </div>
          <div>
            <CheckRow $bold $gap={8}><CheckBox />Update existing field</CheckRow>
            <GroupBox $pt={76}>
              <Combo $h={45} $end $pr={16}><Tri $dir="down" $l={14} $b={14} $c="#a0a0a0" /></Combo>
            </GroupBox>
          </div>
        </FieldColumns>
        <TabBar>
          <Tab $w={166} $on>Expression</Tab>
          <Tab $w={212}>Function Editor</Tab>
        </TabBar>
        <ExprGrid>
          <Col>
            <IconRow>
              {['docNew', 'floppy', 'pencilOff', 'trashOff', 'download', 'upload'].map(n => (
                <IconBtn key={n}><Icon n={n} s={36} /></IconBtn>
              ))}
            </IconRow>
            <Editor>
              <div><Tok $c="#9a6fb5">(</Tok><Tok $c="#d96f6f">1294.5800000000002</Tok><Tok $c="#8b5ab5"> -</Tok></div>
              <div><Tok $c="#6f8bc8">build_up_area_km</Tok><Tok $c="#9a6fb5">) /</Tok></div>
              <div><Tok $c="#6f8bc8">build_up_area_km</Tok></div>
            </Editor>
            <OpRow>
              {OPS.map(o => <OpBtn key={o}>{o}</OpBtn>)}
            </OpRow>
            <FeatureRow>
              Feature
              <FeatureCombo>
                India
                <ComboArrowBox><Tri $dir="down" $l={16} $b={16} $c="#555" /></ComboArrowBox>
              </FeatureCombo>
              <NavBtn $ml={14}><Tri $dir="left" $l={20} $b={36} $c="#cfcfcf" /></NavBtn>
              <NavBtn $ml={15}><Tri $dir="right" $l={20} $b={36} $c="#cfcfcf" /></NavBtn>
            </FeatureRow>
            <PreviewRow>
              <span>Preview:</span>
              <span>0.000896847118492123</span>
            </PreviewRow>
          </Col>
          <Col>
            <SearchLine>
              <SearchBox><SearchGlyph />Search...</SearchBox>
              <PlainBtn $w={127} $h={43} $off>Show Help</PlainBtn>
            </SearchLine>
            <FuncList>
              <FuncItems>
                <FuncHead>row_number</FuncHead>
                {FUNCS.map(f => (
                  <FuncRow key={f}>
                    <FuncArrow><Tri $dir="right" $l={9} $b={18} /></FuncArrow>
                    <FuncLabel>{f}</FuncLabel>
                  </FuncRow>
                ))}
              </FuncItems>
              <VScroll>
                <VBtn><Tri $dir="up" $l={12} $b={16} /></VBtn>
                <VHandle />
                <VTrack />
                <VBtn><Tri $dir="down" $l={12} $b={16} /></VBtn>
              </VScroll>
            </FuncList>
          </Col>
          <HelpPane />
        </ExprGrid>
        <InfoRow>
          <InfoIcon><InfoBubble /></InfoIcon>
          <InfoText>{'You are editing information on this layer but the layer is currently not in edit mode. If you click OK, edit mode will\nautomatically be turned on.'}</InfoText>
        </InfoRow>
        <ButtonRow>
          <PlainBtn $w={90} $h={45} $hot>OK</PlainBtn>
          <PlainBtn $w={90} $h={45}>Cancel</PlainBtn>
          <PlainBtn $w={90} $h={45}>Help</PlainBtn>
        </ButtonRow>
      </DialogBody>
    </Win>
  );
}

const PINK = '#e05a8a';
const EDGE = '#e92b2e';

const Map = () => (
  <Backdrop width="3057" height="1462" viewBox="0 0 3057 1462">
    {/* panel 1 */}
    <path d="M1280 647L1313 647L1320 626L1343 626L1333 647L1430 647L1438 626L1509 626L1519 605L1540 605L1551 584L1551 670L1535 670L1525 687L1502 687L1494 708L1280 708Z" fill={PINK} stroke={EDGE} strokeWidth="8" strokeLinejoin="round" />
    <rect x="10" y="698" width="1290" height="10" fill={PINK} />
    <rect x="1282" y="700" width="54" height="8" fill={EDGE} />
    <rect x="168" y="8" width="28" height="8" fill="#c8242c" />
    <rect x="196" y="8" width="64" height="8" fill="#b54a72" />
    <rect x="260" y="8" width="77" height="8" fill="#c8242c" />
    <rect x="337" y="8" width="66" height="8" fill="#b54a72" />
    <rect x="403" y="8" width="77" height="8" fill="#c8242c" />
    {/* panel 2 */}
    <path d="M1490 1177L1538 1177L1510 1233L1535 1237L1508 1295L1490 1295Z" fill={PINK} stroke={EDGE} strokeWidth="7" strokeLinejoin="round" />
    <path d="M1490 1393L1513 1393L1522 1373L1548 1373L1538 1393L1552 1393L1552 1453L1490 1453Z" fill={PINK} stroke={EDGE} strokeWidth="7" strokeLinejoin="round" />
    <rect x="10" y="1445" width="1500" height="8" fill={PINK} />
    <rect x="195" y="753" width="31" height="10" fill={EDGE} />
    <rect x="226" y="753" width="74" height="10" fill={PINK} />
    <rect x="300" y="753" width="89" height="10" fill="#c7476f" />
    <rect x="389" y="753" width="76" height="10" fill={PINK} />
    <rect x="465" y="753" width="87" height="10" fill={EDGE} />
    {/* panel 3 */}
    <rect x="1788" y="156" width="26" height="6" fill={EDGE} />
    <rect x="1814" y="156" width="61" height="6" fill={PINK} />
    <rect x="1875" y="156" width="66" height="6" fill={EDGE} />
    <rect x="1941" y="156" width="61" height="6" fill={PINK} />
    <rect x="2002" y="156" width="70" height="6" fill={EDGE} />
    <rect x="1618" y="1276" width="374" height="9" fill="#b8323e" />
    <rect x="2329" y="1276" width="238" height="9" fill="#b8323e" />
  </Backdrop>
);

export default function App() {
  return (
    <Canvas>
      <Global />
      <Map />
      <TableWindow t={WIN1} />
      <TableWindow t={WIN2} />
      <CalcWindow />
      <Menu>
        <MenuItem><span>Select All</span><span>Ctrl+A</span></MenuItem>
        <MenuItem>Copy Cell Content</MenuItem>
        <MenuItem>Zoom to Feature</MenuItem>
        <MenuItem>Pan to Feature</MenuItem>
        <MenuItem>Flash Feature</MenuItem>
        <MenuSep />
        <MenuItem>Open Form...</MenuItem>
      </Menu>
      <Tooltip>Open field calculator (Ctrl+I)</Tooltip>

      <RedFrame $x={0} $y={0} $w={1560} $h={717} />
      <RedFrame $x={0} $y={745} $w={1560} $h={717} />
      <RedFrame $x={1592} $y={147} $w={1465} $h={1146} $t={11} />

      <RedFrame $x={70} $y={23} $w={250} $h={69} />
      <RedFrame $x={1084} $y={292} $w={420} $h={69} />
      <RedFrame $x={83} $y={766} $w={285} $h={69} />
      <RedFrame $x={1051} $y={840} $w={66} $h={58} />
      <RedFrame $x={1631} $y={379} $w={565} $h={108} />
      <RedFrame $x={1646} $y={666} $w={473} $h={133} />
      <RedFrame $x={2700} $y={1190} $w={118} $h={73} />

      <Step $x={1035} $y={305}>1.</Step>
      <Step $x={997} $y={805}>2.</Step>
      <Step $x={1953} $y={330}>3.</Step>
      <Step $x={2032} $y={717}>4.</Step>
      <Step $x={2624} $y={1189}>5.</Step>
    </Canvas>
  );
}
